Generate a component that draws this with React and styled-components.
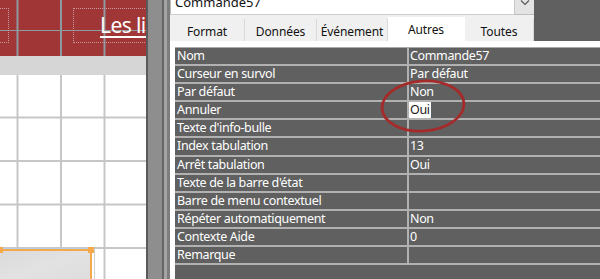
import React from "react"
import styled, { createGlobalStyle } from "styled-components"

const GlobalStyle = createGlobalStyle`
  html, body {
    margin: 0;
    padding: 0;
  }
  body {
    width: 600px;
    height: 279px;
    overflow: hidden;
    background: #fff;
    font-family: "Noto Sans", "Open Sans", sans-serif;
  }
`

const Screen = styled.div`
  display: flex;
  width: 600px;
  height: 279px;
  overflow: hidden;
`

/* ---- report design surface ---- */

const DesignPane = styled.div`
  width: 146px;
  display: flex;
  flex-direction: column;
  overflow: hidden;
`

const HeaderBand = styled.div`
  position: relative;
  height: 56px;
  background-color: #a13636;
  background-image:
    linear-gradient(to right, #8e9aa0 0 1.5px, transparent 1.5px),
    linear-gradient(to bottom, transparent 30px, #8e9aa0 30px 31.5px, transparent 31.5px);
  background-size: 43.5px 100%, 100% 100%;
  background-position: 16.5px 0, 0 0;
  background-repeat: repeat-x, no-repeat;
`

const LabelBox = styled.div`
  position: absolute;
  top: 8px;
  left: ${p => p.$left}px;
  width: ${p => p.$width}px;
  height: 35px;
  border: 1px dotted #c99a9a;
  box-sizing: border-box;
`

const LabelText = styled.span`
  position: absolute;
  left: 26px;
  top: 2px;
  color: #fff;
  font-size: 21px;
  line-height: 28px;
  letter-spacing: -0.6px;
  text-decoration: underline;
  text-decoration-thickness: 2px;
  text-underline-offset: 3px;
  white-space: nowrap;
`

const SectionBar = styled.div`
  height: 19px;
  background: #d6d6d6;
`

const DetailArea = styled.div`
  position: relative;
  flex: 1;
  background-color: #fff;
  background-image:
    linear-gradient(to right, #c6c6c6 0 2px, transparent 2px),
    linear-gradient(to bottom, transparent 42px, #c6c6c6 42px 44px);
  background-size: 43.5px 100%, 100% 43.5px;
  background-position: 16.5px 0, 0 0;
`

const SelectedControl = styled.div`
  position: absolute;
  left: -4px;
  top: 174px;
  width: 96px;
  height: 40px;
  box-sizing: border-box;
  border-top: 2px solid #f6a94a;
  border-right: 2px solid #f6a94a;
  background: linear-gradient(160deg, #dadada 0%, #e2e2e2 45%, #dcdcdc 100%);
  box-shadow: 0 -1px 0 #b7cfe6, 2px 0 0 #fff, 3px 0 0 #cfcfcf;
`

const Handle = styled.div`
  position: absolute;
  top: -4px;
  ${p => (p.$side === "left" ? "left: 1px;" : "right: -4px;")}
  width: 6px;
  height: 6px;
  background: #f6a94a;
`

const Splitter = styled.div`
  width: 24px;
  background: linear-gradient(
    to right,
    #5a5a5a 0 2px,
    #8e8e8e 2px 16px,
    #666 16px 18px,
    #a4a4a4 18px 21px,
    #7d7d7d 21px 24px
  );
`

/* ---- property sheet ---- */

const PropertySheet = styled.div`
  position: relative;
  flex: 1;
  display: flex;
  flex-direction: column;
  background: #fff;
`

const TopArea = styled.div`
  display: flex;
  height: 41px;
`

const TopLeft = styled.div`
  width: 364px;
  display: flex;
  flex-direction: column;
  background: #f0f0f0;
`

const TopFiller = styled.div`
  flex: 1;
  background: #606060;
`

const ComboRow = styled.div`
  display: flex;
  height: 15px;
`

const ComboBox = styled.div`
  flex: 1;
  display: flex;
  align-items: flex-end;
  overflow: hidden;
  background: #fff;
  padding: 0 0 5px 4px;
  box-sizing: border-box;
  border-left: 1px solid #bdbdbd;
  border-bottom: 1px solid #cfcfcf;
  font-size: 13px;
  line-height: 14px;
  color: #111;
`

const DropButton = styled.div`
  width: 20px;
  display: flex;
  align-items: flex-start;
  justify-content: center;
  background: #e3e3e3;
  border-left: 1px solid #c8c8c8;
  border-bottom: 1px solid #bdbdbd;
  box-sizing: border-box;
`

const TabStrip = styled.div`
  display: flex;
  align-items: flex-end;
  height: 24px;
  margin-top: 2px;
`

const Tab = styled.div`
  width: ${p => p.$width}px;
  height: ${p => (p.$active ? 24 : 22)}px;
  box-sizing: border-box;
  display: flex;
  align-items: center;
  justify-content: center;
  padding-top: ${p => (p.$active ? 0 : 3)}px;
  background: ${p => (p.$active ? "#fff" : "#f0f0f0")};
  border-right: 1px solid ${p => (p.$active ? "#fff" : "#d9d9d9")};
  font-size: 12px;
  letter-spacing: -0.1px;
  color: #111;
  white-space: nowrap;
  overflow: hidden;
`

const TabGap = styled.div`
  height: 6px;
  background: #fff;
`

const Grid = styled.div`
  flex: 1;
  margin-left: 5px;
  background: #606060;
  border-top: 1px solid #a9a9a9;
`

const Row = styled.div`
  display: flex;
  height: 16.1px;
  border-bottom: 2px solid #b1b1b1;
`

const NameCell = styled.div`
  width: 234px;
  padding-left: 2px;
  box-sizing: border-box;
  border-right: 2px solid #b1b1b1;
  color: #fff;
  font-size: 12.5px;
  line-height: 16px;
  letter-spacing: -0.35px;
  white-space: nowrap;
  overflow: hidden;
`

const ValueCell = styled.div`
  flex: 1;
  display: flex;
  font-size: 12.5px;
  line-height: 16px;
  letter-spacing: -0.35px;
  white-space: nowrap;
`

const ValueText = styled.span`
  padding: 0 1px;
  color: ${p => (p.$selected ? "#1a1a1a" : "#fff")};
  background: ${p => (p.$selected ? "#fff" : "transparent")};
`

const Highlight = styled.svg`
  position: absolute;
  left: 211px;
  top: 79px;
  overflow: visible;
  pointer-events: none;
`

const tabs = [
  { label: "Format", width: 75 },
  { label: "Données", width: 72 },
  { label: "Événement", width: 71 },
  { label: "Autres", width: 77, active: true },
  { label: "Toutes", width: 69 },
]

const properties = [
  ["Nom", "Commande57"],
  ["Curseur en survol", "Par défaut"],
  ["Par défaut", "Non"],
  ["Annuler", "Oui", true],
  ["Texte d'info-bulle", ""],
  ["Index tabulation", "13"],
  ["Arrêt tabulation", "Oui"],
  ["Texte de la barre d'état", ""],
  ["Barre de menu contextuel", ""],
  ["Répéter automatiquement", "Non"],
  ["Contexte Aide", "0"],
  ["Remarque", ""],
]

const Chevron = () => (
  <svg width="10" height="6" viewBox="0 0 10 6">
    <path d="M1 0.5 L5 4.5 L9 0.5" fill="none" stroke="#555" strokeWidth="1.1" />
  </svg>
)

const App = () => (
  <>
    <GlobalStyle />
    <Screen>
      <DesignPane>
        <HeaderBand>
          <LabelBox $left={-20} $width={29} />
          <LabelBox $left={73} $width={100}>
            <LabelText>Les listes</LabelText>
          </LabelBox>
        </HeaderBand>
        <SectionBar />
        <DetailArea>
          <SelectedControl>
            <Handle $side="left" />
            <Handle $side="right" />
          </SelectedControl>
        </DetailArea>
      </DesignPane>
      <Splitter />
      <PropertySheet>
        <TopArea>
          <TopLeft>
            <ComboRow>
              <ComboBox>Commande57</ComboBox>
              <DropButton>
                <Chevron />
              </DropButton>
            </ComboRow>
            <TabStrip>
              {tabs.map(t => (
                <Tab key={t.label} $width={t.width} $active={t.active}>
                  {t.label}
                </Tab>
              ))}
            </TabStrip>
          </TopLeft>
          <TopFiller />
        </TopArea>
        <TabGap />
        <Grid>
          {properties.map(([name, value, selected]) => (
            <Row key={name}>
              <NameCell>{name}</NameCell>
              <ValueCell>
                <ValueText $selected={selected}>{value}</ValueText>
              </ValueCell>
            </Row>
          ))}
        </Grid>
        <Highlight width="84" height="54" viewBox="0 0 84 54">
          <ellipse
            cx="42"
            cy="27"
            rx="41"
            ry="25"
            transform="rotate(-4 42 27)"
            fill="none"
            stroke="#a52a2a"
            strokeWidth="2.8"
          />
        </Highlight>
      </PropertySheet>
    </Screen>
  </>
)

export default App
